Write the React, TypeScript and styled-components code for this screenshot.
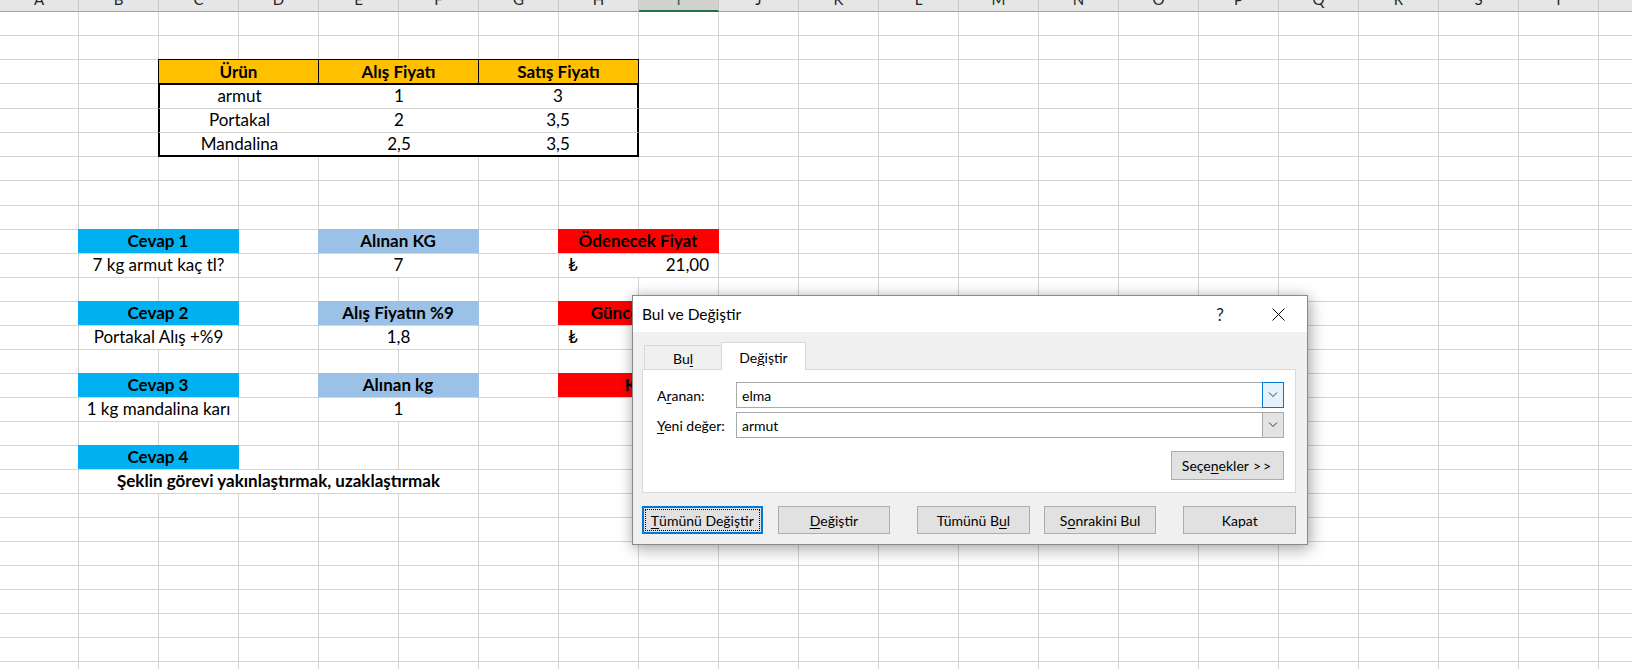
import React from 'react';
import styled, { createGlobalStyle, css } from 'styled-components';

const GRID = '#d4d4d4';
const COLUMNS = 'ABCDEFGHIJKLMNOPQRSTUV'.split('');
const ACTIVE_COL = 8;
const ROW_HEIGHTS = [24, 24, 24, 25, 24, 24, 24, 25, ...Array(20).fill(24)];

type Kind = 'head' | 'table' | 'label' | 'text' | 'bold' | 'money';

interface CellDef {
  col: number;
  span: number;
  kind: Kind;
  text?: string;
  value?: string;
  fill?: string;
  first?: boolean;
  last?: boolean;
  top?: boolean;
  bottom?: boolean;
}

const CYAN = '#00b0f0';
const BLUE = '#9bc2e6';
const RED = '#ff0000';

const tableRow = (values: string[], top: boolean, bottom: boolean): CellDef[] =>
  values.map((text, i) => ({
    col: 2 + i * 2,
    span: 2,
    kind: 'table',
    text,
    first: i === 0,
    last: i === values.length - 1,
    top,
    bottom,
  }));

// row number -> cells (columns are zero based, A = 0)
const SHEET: Record<number, CellDef[]> = {
  3: [
    { col: 2, span: 2, kind: 'head', text: 'Ürün' },
    { col: 4, span: 2, kind: 'head', text: 'Alış Fiyatı' },
    { col: 6, span: 2, kind: 'head', text: 'Satış Fiyatı' },
  ],
  4: tableRow(['armut', '1', '3'], true, false),
  5: tableRow(['Portakal', '2', '3,5'], false, false),
  6: tableRow(['Mandalina', '2,5', '3,5'], false, true),
  10: [
    { col: 1, span: 2, kind: 'label', fill: CYAN, text: 'Cevap 1' },
    { col: 4, span: 2, kind: 'label', fill: BLUE, text: 'Alınan KG' },
    { col: 7, span: 2, kind: 'label', fill: RED, text: 'Ödenecek Fiyat' },
  ],
  11: [
    { col: 1, span: 2, kind: 'text', text: '7 kg armut kaç tl?' },
    { col: 4, span: 2, kind: 'text', text: '7' },
    { col: 7, span: 2, kind: 'money', value: '21,00' },
  ],
  13: [
    { col: 1, span: 2, kind: 'label', fill: CYAN, text: 'Cevap 2' },
    { col: 4, span: 2, kind: 'label', fill: BLUE, text: 'Alış Fiyatın %9' },
    { col: 7, span: 2, kind: 'label', fill: RED, text: 'Güncel Fiyat' },
  ],
  14: [
    { col: 1, span: 2, kind: 'text', text: 'Portakal Alış +%9' },
    { col: 4, span: 2, kind: 'text', text: '1,8' },
    { col: 7, span: 2, kind: 'money', value: '2,18' },
  ],
  16: [
    { col: 1, span: 2, kind: 'label', fill: CYAN, text: 'Cevap 3' },
    { col: 4, span: 2, kind: 'label', fill: BLUE, text: 'Alınan kg' },
    { col: 7, span: 2, kind: 'label', fill: RED, text: 'Kar' },
  ],
  17: [
    { col: 1, span: 2, kind: 'text', text: '1 kg mandalina karı' },
    { col: 4, span: 2, kind: 'text', text: '1' },
  ],
  19: [{ col: 1, span: 2, kind: 'label', fill: CYAN, text: 'Cevap 4' }],
  20: [{ col: 1, span: 5, kind: 'bold', text: 'Şeklin görevi yakınlaştırmak, uzaklaştırmak' }],
};

const GlobalStyle = createGlobalStyle`
  html, body {
    margin: 0;
    padding: 0;
    background: #fff;
    overflow: hidden;
  }
  body {
    font-family: Lato, 'Noto Sans', 'DejaVu Sans', sans-serif;
    color: #000;
  }
`;

const Page = styled.div`
  position: relative;
  width: 1632px;
  height: 669px;
  overflow: hidden;
`;

const Sheet = styled.div`
  margin-top: -12px;
  display: flex;
  flex-direction: column;
`;

const Row = styled.div<{ $h: number }>`
  display: grid;
  grid-template-columns: 79px repeat(21, 80px);
  height: ${p => p.$h}px;
`;

const ColHead = styled.div<{ $active?: boolean }>`
  box-sizing: border-box;
  background: ${p => (p.$active ? '#d2d2d2' : '#e6e6e6')};
  border-right: 1px solid #c6c6c6;
  border-bottom: ${p => (p.$active ? '2px solid #217346' : '1px solid #a3a3a3')};
  color: ${p => (p.$active ? '#1d6b40' : '#262626')};
  font-size: 15px;
  line-height: ${p => (p.$active ? 22 : 23)}px;
  text-align: center;
`;

const Cell = styled.div<{ $span?: number }>`
  box-sizing: border-box;
  grid-column: span ${p => p.$span ?? 1};
  min-width: 0;
  border-right: 1px solid ${GRID};
  border-bottom: 1px solid ${GRID};
  background: #fff;
  display: flex;
  align-items: center;
  justify-content: center;
  font-size: 17px;
  line-height: 1.2;
  white-space: nowrap;
`;

const BoldCell = styled(Cell)`
  font-weight: 700;
`;

const Label = styled(Cell)<{ $fill: string }>`
  margin: -1px 0 0 -1px;
  background: ${p => p.$fill};
  border-right-color: ${p => p.$fill};
  font-weight: 700;
`;

const Money = styled(Cell)`
  justify-content: space-between;
  padding: 0 9px 0 9px;
`;

const TableHead = styled(Cell)`
  margin: -1px 0 0 -1px;
  background: #ffc000;
  border: 1px solid #000;
  border-bottom: none;
  font-weight: 700;
`;

const TableCell = styled(Cell)<{ $first?: boolean; $last?: boolean; $top?: boolean; $bottom?: boolean }>`
  border-right: ${p => (p.$last ? '2px solid #000' : 'none')};
  ${p =>
    p.$first &&
    css`
      margin-left: -1px;
      border-left: 2px solid #000;
    `}
  ${p =>
    p.$top &&
    css`
      margin-top: -1px;
      border-top: 2px solid #000;
    `}
  ${p =>
    p.$bottom &&
    css`
      border-bottom: 2px solid #000;
    `}
`;

function SheetCell({ def }: { def: CellDef }) {
  switch (def.kind) {
    case 'head':
      return <TableHead $span={def.span}>{def.text}</TableHead>;
    case 'table':
      return (
        <TableCell $span={def.span} $first={def.first} $last={def.last} $top={def.top} $bottom={def.bottom}>
          {def.text}
        </TableCell>
      );
    case 'label':
      return (
        <Label $span={def.span} $fill={def.fill ?? '#fff'}>
          {def.text}
        </Label>
      );
    case 'money':
      return (
        <Money $span={def.span}>
          <span>₺</span>
          <span>{def.value}</span>
        </Money>
      );
    case 'bold':
      return <BoldCell $span={def.span}>{def.text}</BoldCell>;
    default:
      return <Cell $span={def.span}>{def.text}</Cell>;
  }
}

function SheetRow({ index, height }: { index: number; height: number }) {
  const defs = SHEET[index] ?? [];
  const cells: React.ReactNode[] = [];
  let col = 0;
  while (col < COLUMNS.length) {
    const def = defs.find(d => d.col === col);
    if (def) {
      cells.push(<SheetCell key={col} def={def} />);
      col += def.span;
    } else {
      cells.push(<Cell key={col} />);
      col += 1;
    }
  }
  return <Row $h={height}>{cells}</Row>;
}

/* ---------- dialog ---------- */

const Dialog = styled.div`
  position: absolute;
  left: 632px;
  top: 295px;
  width: 676px;
  height: 250px;
  box-sizing: border-box;
  border: 1px solid #8a8a8a;
  background: #f0f0f0;
  box-shadow: 0 0 12px rgba(0, 0, 0, 0.2), 3px 6px 16px rgba(0, 0, 0, 0.22);
  display: flex;
  flex-direction: column;
  color: #000;
`;

const TitleBar = styled.div`
  flex: none;
  height: 36px;
  background: #fff;
  display: flex;
  align-items: center;
`;

const Title = styled.div`
  flex: 1;
  padding-left: 9px;
  font-size: 15.5px;
`;

const TitleButton = styled.div`
  width: 58px;
  height: 100%;
  display: flex;
  align-items: center;
  justify-content: center;
  font-size: 17px;
  color: #1a1a1a;
`;

const Body = styled.div`
  flex: 1;
  padding: 10px 11px 10px 9px;
  display: flex;
  flex-direction: column;
`;

const TabStrip = styled.div`
  height: 27px;
  padding-left: 2px;
  display: flex;
  align-items: flex-end;
  position: relative;
  z-index: 1;
`;

const Tab = styled.div<{ $active?: boolean }>`
  box-sizing: border-box;
  display: flex;
  align-items: center;
  justify-content: center;
  padding-top: 2px;
  font-size: 14px;
  ${p =>
    p.$active
      ? css`
          width: 85px;
          height: 28px;
          margin-bottom: -1px;
          background: #fff;
          border: 1px solid #d9d9d9;
          border-bottom: none;
        `
      : css`
          width: 77px;
          height: 24px;
          border-top: 1px solid #d9d9d9;
          border-left: 1px solid #d9d9d9;
        `}
`;

const Panel = styled.div`
  box-sizing: border-box;
  height: 124px;
  background: #fff;
  border: 1px solid #d9d9d9;
  padding: 12px 11px 0 14px;
  display: flex;
  flex-direction: column;
`;

const Field = styled.div`
  height: 26px;
  display: flex;
  align-items: center;

  & + & {
    margin-top: 4px;
  }
`;

const FieldLabel = styled.div`
  width: 79px;
  font-size: 14px;
`;

const Combo = styled.div`
  flex: 1;
  height: 26px;
  box-sizing: border-box;
  border: 1px solid #a9a9a9;
  display: flex;
  align-items: center;
  font-size: 14px;
`;

const ComboText = styled.div`
  flex: 1;
  padding-left: 5px;
`;

const ComboArrow = styled.div<{ $hot?: boolean }>`
  box-sizing: border-box;
  width: 22px;
  height: 26px;
  margin: -1px -1px -1px 0;
  display: flex;
  align-items: center;
  justify-content: center;
  background: ${p => (p.$hot ? '#e5f1fb' : '#e3e3e3')};
  border: 1px solid ${p => (p.$hot ? '#0078d7' : '#a9a9a9')};
`;

const OptionsRow = styled.div`
  margin-top: 13px;
  display: flex;
  justify-content: flex-end;
`;

const Button = styled.div<{ $w: number; $gap?: number; $focused?: boolean }>`
  box-sizing: border-box;
  width: ${p => p.$w}px;
  height: 28px;
  margin-left: ${p => p.$gap ?? 0}px;
  background: #e1e1e1;
  border: 1px solid #adadad;
  display: flex;
  align-items: center;
  justify-content: center;
  font-size: 14px;
  white-space: nowrap;
  ${p =>
    p.$focused &&
    css`
      border: 2px solid #0078d7;
      outline: 1px dotted #000;
      outline-offset: -4px;
    `}
`;

const OptionsButton = styled(Button)`
  height: 29px;
`;

const ButtonRow = styled.div`
  margin-top: 13px;
  display: flex;
`;

const Key = styled.span`
  text-decoration: underline;
  text-underline-offset: 2px;
  text-decoration-thickness: 1px;
`;

const Arrows = styled.span`
  margin-left: 4px;
  letter-spacing: 2px;
`;

function Chevron() {
  return (
    <svg width="10" height="6" viewBox="0 0 10 6">
      <polyline points="1,0.5 5,4.5 9,0.5" fill="none" stroke="#3c3c3c" strokeWidth="1" />
    </svg>
  );
}

function CloseIcon() {
  return (
    <svg width="13" height="13" viewBox="0 0 13 13">
      <path d="M0.5 0.5 L12.5 12.5 M12.5 0.5 L0.5 12.5" stroke="#000" strokeWidth="1" />
    </svg>
  );
}

const BUTTONS: { label: React.ReactNode; width: number; gap: number; focused?: boolean }[] = [
  { label: <><Key>T</Key>ümünü Değiştir</>, width: 121, gap: 0, focused: true },
  { label: <><Key>D</Key>eğiştir</>, width: 113, gap: 15 },
  { label: <>Tümünü B<Key>u</Key>l</>, width: 113, gap: 27 },
  { label: <>S<Key>o</Key>nrakini Bul</>, width: 113, gap: 14 },
  { label: <>Kapat</>, width: 113, gap: 27 },
];

function FindReplaceDialog() {
  return (
    <Dialog>
      <TitleBar>
        <Title>Bul ve Değiştir</Title>
        <TitleButton>?</TitleButton>
        <TitleButton>
          <CloseIcon />
        </TitleButton>
      </TitleBar>
      <Body>
        <TabStrip>
          <Tab>
            Bu<Key>l</Key>
          </Tab>
          <Tab $active>
            De<Key>ğ</Key>iştir
          </Tab>
        </TabStrip>
        <Panel>
          <Field>
            <FieldLabel>
              A<Key>r</Key>anan:
            </FieldLabel>
            <Combo>
              <ComboText>elma</ComboText>
              <ComboArrow $hot>
                <Chevron />
              </ComboArrow>
            </Combo>
          </Field>
          <Field>
            <FieldLabel>
              <Key>Y</Key>eni değer:
            </FieldLabel>
            <Combo>
              <ComboText>armut</ComboText>
              <ComboArrow>
                <Chevron />
              </ComboArrow>
            </Combo>
          </Field>
          <OptionsRow>
            <OptionsButton $w={113}>
              Seçe<Key>n</Key>ekler<Arrows>&gt;&gt;</Arrows>
            </OptionsButton>
          </OptionsRow>
        </Panel>
        <ButtonRow>
          {BUTTONS.map((b, i) => (
            <Button key={i} $w={b.width} $gap={b.gap} $focused={b.focused}>
              {b.label}
            </Button>
          ))}
        </ButtonRow>
      </Body>
    </Dialog>
  );
}

export default function App() {
  return (
    <Page>
      <GlobalStyle />
      <Sheet>
        <Row $h={24}>
          {COLUMNS.map((c, i) => (
            <ColHead key={c} $active={i === ACTIVE_COL}>
              {c}
            </ColHead>
          ))}
        </Row>
        {ROW_HEIGHTS.map((h, i) => (
          <SheetRow key={i} index={i + 1} height={h} />
        ))}
      </Sheet>
      <FindReplaceDialog />
    </Page>
  );
}
